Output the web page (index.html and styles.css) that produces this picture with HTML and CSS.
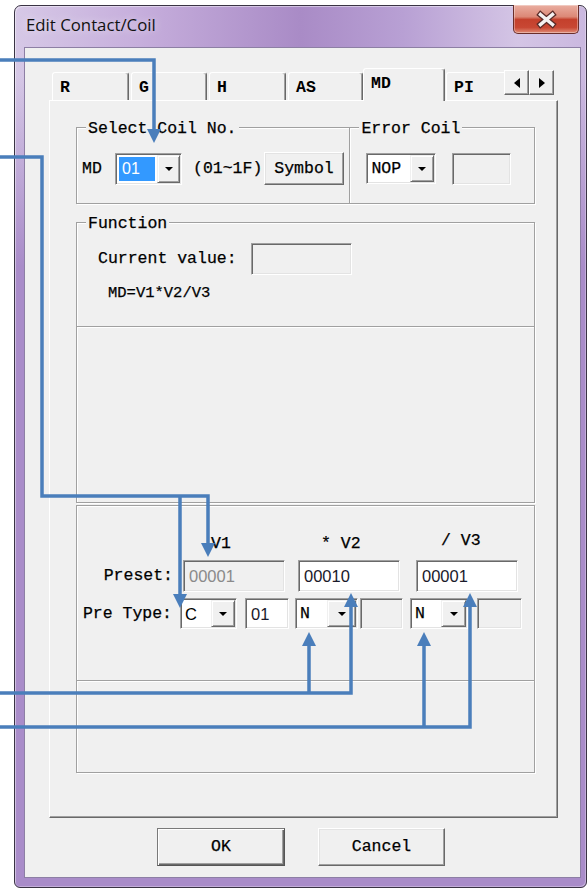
FILE: index.html
```html
<!DOCTYPE html>
<html>
<head>
<meta charset="utf-8">
<title>Edit Contact/Coil</title>
<link rel="stylesheet" href="styles.css">
</head>
<body>
<div class="window">
  <div class="titlebar">
    <span class="title">Edit Contact/Coil</span>
    <button class="close" aria-label="Close">
      <svg width="63" height="27" viewBox="0 0 63 27">
        <path d="M25.5 8.5 L37.5 18.5 M37.5 8.5 L25.5 18.5" stroke="#5a2b28" stroke-width="6" stroke-linecap="square" fill="none"/>
        <path d="M25.5 8.5 L37.5 18.5 M37.5 8.5 L25.5 18.5" stroke="#f4f1f1" stroke-width="3.4" stroke-linecap="square" fill="none"/>
      </svg>
    </button>
  </div>

  <div class="client">
    <div class="tabstrip">
      <div class="tablist">
        <div class="tab t-r">R</div>
        <div class="tab t-g">G</div>
        <div class="tab t-h">H</div>
        <div class="tab t-as">AS</div>
        <div class="tab t-md active">MD</div>
        <div class="tab t-pi">PI</div>
      </div>
      <div class="spin">
        <span class="spin-btn"><i class="tri-left"></i></span>
        <span class="spin-btn"><i class="tri-right"></i></span>
      </div>
    </div>

    <div class="panel">
      <div class="toprow">
        <div class="group g-select">
          <div class="legend">Select Coil No.</div>
          <div class="row r-select">
            <span class="md-lbl">MD</span>
            <div class="combo c-coil"><span class="val"><span class="sel">01</span></span><span class="drop"><i></i></span></div>
            <span class="range">(01~1F)</span>
            <button class="btn symbol">Symbol</button>
          </div>
        </div>
        <div class="group g-error">
          <div class="legend">Error Coil</div>
          <div class="row r-error">
            <div class="combo c-nop"><span class="val">NOP</span><span class="drop"><i></i></span></div>
            <div class="edit disabled e-err"></div>
          </div>
        </div>
      </div>

      <div class="group g-func">
        <div class="legend">Function</div>
        <div class="cv-row">
          <span class="cv-label">Current value:</span>
          <div class="edit disabled e-cv"></div>
        </div>
        <div class="formula">MD=V1*V2/V3</div>
        <div class="sep"></div>
      </div>

      <div class="group g-lower">
        <div class="hdr-row">
          <span class="h1">V1</span>
          <span class="h2">* V2</span>
          <span class="h3">/ V3</span>
        </div>
        <div class="preset-row">
          <span class="plabel">Preset:</span>
          <div class="edit disabled e-v1">00001</div>
          <div class="edit e-v2">00010</div>
          <div class="edit e-v3">00001</div>
        </div>
        <div class="type-row">
          <span class="tlabel">Pre Type:</span>
          <div class="combo c-type1"><span class="val">C</span><span class="drop"><i></i></span></div>
          <div class="edit e-num">01</div>
          <div class="combo c-type2"><span class="val">N</span><span class="drop"><i></i></span></div>
          <div class="edit disabled e-x2"></div>
          <div class="combo c-type3"><span class="val">N</span><span class="drop"><i></i></span></div>
          <div class="edit disabled e-x3"></div>
        </div>
        <div class="sep sep-lower"></div>
      </div>
    </div>

    <div class="buttons">
      <button class="btn default b-ok">OK</button>
      <button class="btn b-cancel">Cancel</button>
    </div>
  </div>
</div>

<!-- callout lines drawn over the dialog -->
<svg class="callouts" width="587" height="888" viewBox="0 0 587 888">
  <g fill="none" stroke="#4a7ebb" stroke-width="3.5" stroke-linejoin="miter">
    <path d="M0 60 H154 V131"/>
    <path d="M0 157 H42 V496 H208 V545"/>
    <path d="M180 496 V596"/>
    <path d="M0 693 H351 V605"/>
    <path d="M309 693 V644"/>
    <path d="M0 727 H470 V605"/>
    <path d="M424 727 V644"/>
  </g>
  <g fill="#4a7ebb">
    <polygon points="147,129 161,129 154,143"/>
    <polygon points="201,543 215,543 208,557"/>
    <polygon points="173,594 187,594 180,608"/>
    <polygon points="344,607 358,607 351,593"/>
    <polygon points="302,646 316,646 309,632"/>
    <polygon points="463,607 477,607 470,593"/>
    <polygon points="417,646 431,646 424,632"/>
  </g>
</svg>
</body>
</html>
```

FILE: styles.css
```css
* { box-sizing: border-box; }

html, body { margin: 0; padding: 0; }

body {
  width: 587px;
  height: 888px;
  overflow: hidden;
  position: relative;
  background: #fff;
  font-family: "Liberation Mono", "Courier New", monospace;
  font-size: 16.5px;
  line-height: 16px;
  color: #000;
}

/* ---------- window frame ---------- */
.window {
  margin: 5px 0 0 14px;
  width: 573px;
  height: 883px;
  border: 1px solid #3a3344;
  border-radius: 7px 7px 6px 6px;
  padding: 0 5px 9px 9px;
  display: flex;
  flex-direction: column;
  background:
    linear-gradient(180deg, rgba(170,142,202,0) 0, rgba(170,142,202,0) 70px, #a98cc9 260px),
    linear-gradient(90deg, #d6c8e6 0%, #c6aedc 22%, #a98bc6 50%, #b8a0d4 68%, #d4c5e5 88%, #cab8df 100%);
  box-shadow: inset 1px 1px 0 rgba(255,255,255,.45), inset -1px -1px 0 rgba(255,255,255,.3);
}

.titlebar {
  height: 41px;
  display: flex;
  align-items: flex-start;
  flex: none;
}

.title {
  margin: 8px 0 0 2px;
  font-family: "Open Sans", "Noto Sans", sans-serif;
  font-size: 16.8px;
  line-height: 22px;
  color: #111;
  text-shadow: 0 0 8px rgba(255,255,255,.7);
}

.close {
  margin: -1px 2px 0 auto;
  width: 66px;
  height: 29px;
  padding: 0;
  border: 1px solid #6a2e2a;
  border-top: none;
  border-radius: 0 0 5px 5px;
  background: linear-gradient(180deg, #eaaea1 0%, #dc8876 42%, #c4402c 52%, #c84733 80%, #e08c76 100%);
  box-shadow: inset 0 0 0 1px rgba(255,255,255,.35);
  display: flex;
  align-items: center;
  justify-content: center;
}
.close svg { display: block; }

/* ---------- client area ---------- */
.client {
  flex: 1;
  background: #f0f0f0;
  border: 1px solid #8d7fa4;
  display: flex;
  flex-direction: column;
  -webkit-text-stroke: 0.25px currentColor;
}

/* tabs */
.tabstrip {
  display: flex;
  align-items: flex-start;
  margin: 20px 0 0 24px;
  width: 509px;
  height: 32px;
  position: relative;
  z-index: 1;
}

.tablist {
  flex: none;
  width: 455px;
  height: 33px;
  display: flex;
  align-items: flex-end;
  overflow: hidden;
  padding-left: 3px;
}

.tab {
  flex: none;
  height: 28px;
  margin-bottom: 1px;
  border: 1px solid;
  border-bottom: none;
  border-color: #fff #696969 transparent #fff;
  border-radius: 3px 3px 0 0;
  box-shadow: inset -1px 0 0 #a0a0a0;
  background: #f0f0f0;
  padding: 7px 0 0 7px;
  line-height: 16px;
  font-weight: bold;
  -webkit-text-stroke: 0;
}
.t-r { width: 77px; margin-right: 2px; }
.t-g { width: 76px; margin-right: 2px; }
.t-h { width: 77px; margin-right: 2px; }
.t-as { width: 75px; }
.t-md { width: 82px; margin-right: 1px; }
.t-pi { width: 80px; }

.tab.active {
  height: 33px;
  margin-bottom: 0;
  padding-top: 7px;
}

.spin {
  display: flex;
  margin-top: 2px;
}
.spin-btn {
  width: 25px;
  height: 25px;
  background: #f0f0f0;
  border: 1px solid;
  border-color: #fff #696969 #696969 #fff;
  box-shadow: inset -1px -1px 0 #a0a0a0;
  display: flex;
  align-items: center;
  justify-content: center;
}
.tri-left {
  border-top: 5.5px solid transparent;
  border-bottom: 5.5px solid transparent;
  border-right: 6px solid #000;
}
.tri-right {
  border-top: 5.5px solid transparent;
  border-bottom: 5.5px solid transparent;
  border-left: 6px solid #000;
}

.panel {
  margin-left: 24px;
  width: 509px;
  height: 718px;
  border: 1px solid;
  border-color: #fff #696969 #696969 #fff;
  box-shadow: inset -1px -1px 0 #a0a0a0;
  padding-left: 26px;
  flex: none;
}

/* ---------- group boxes ---------- */
.group {
  border: 1px solid #a0a0a0;
  box-shadow: inset 1px 1px 0 #fff, 1px 1px 0 #fff;
}

.legend {
  width: fit-content;
  height: 16px;
  line-height: 16px;
  margin: -7px 0 -9px 9px;
  padding: 0 2px;
  background: #f0f0f0;
  white-space: pre;
}

.toprow {
  display: flex;
  margin-top: 26px;
  width: 459px;
  height: 77px;
}
.g-select { width: 275px; height: 77px; }
.g-error { width: 186px; height: 77px; margin-left: -1px; }

.row {
  display: flex;
  align-items: center;
  height: 33px;
  margin-top: 24px;
}
.r-select { padding-left: 5px; }
.r-error { padding-left: 16px; }

.md-lbl { width: 33px; }
.range { width: 70px; margin-left: 11px; white-space: pre; }

/* ---------- controls ---------- */
.combo {
  display: flex;
  height: 32px;
  border: 1px solid;
  border-color: #a0a0a0 #fff #fff #a0a0a0;
  box-shadow: inset 1px 1px 0 #696969, inset -1px -1px 0 #e3e3e3;
  background: #fff;
  padding: 1px;
  flex: none;
}
.combo .val {
  flex: 1;
  display: flex;
  align-items: center;
  padding-left: 3px;
}
.c-coil .val { padding: 2px; }
.sel {
  flex: 1;
  align-self: stretch;
  display: flex;
  align-items: center;
  padding-left: 3px;
  background: #3399ff;
  color: #fff;
  font-family: "Liberation Sans", Arial, sans-serif;
  font-size: 16px;
  -webkit-text-stroke: 0;
}
.drop {
  width: 23px;
  background: #f0f0f0;
  border: 1px solid;
  border-color: #f0f0f0 #696969 #696969 #f0f0f0;
  box-shadow: inset 1px 1px 0 #fff, inset -1px -1px 0 #a0a0a0;
  display: flex;
  align-items: center;
  justify-content: center;
}
.drop i {
  border-left: 4px solid transparent;
  border-right: 4px solid transparent;
  border-top: 4px solid #000;
}

.c-coil { width: 67px; }
.c-nop { width: 70px; height: 31px; }
.c-nop .drop { width: 24px; }

.edit {
  flex: none;
  height: 32px;
  border: 1px solid;
  border-color: #a0a0a0 #fff #fff #a0a0a0;
  box-shadow: inset 1px 1px 0 #696969, inset -1px -1px 0 #e3e3e3;
  background: #fff;
  padding-left: 5px;
  display: flex;
  align-items: center;
  font-family: "Liberation Sans", Arial, sans-serif;
  font-size: 16.5px;
  color: #1a1a2a;
  -webkit-text-stroke: 0;
}
.edit.disabled { background: #f0f0f0; color: #8a8a8a; }
.e-err { width: 59px; margin-left: 16px; }

.btn {
  background: #f0f0f0;
  border: 1px solid;
  border-color: #fff #696969 #696969 #fff;
  box-shadow: inset -1px -1px 0 #a0a0a0, inset 1px 1px 0 #e3e3e3;
  font: inherit;
  color: #000;
  padding: 0;
  line-height: 16px;
  -webkit-text-stroke: 0.25px currentColor;
}
.symbol { width: 80px; height: 33px; margin-left: 1px; }

/* ---------- function group ---------- */
.g-func {
  margin-top: 18px;
  width: 459px;
  height: 281px;
}
.cv-row {
  display: flex;
  align-items: center;
  height: 32px;
  margin-top: 20px;
  padding-left: 21px;
}
.cv-label { width: 153px; white-space: pre; }
.e-cv { width: 101px; height: 32px; }

.formula {
  margin: 10px 0 0 31px;
  line-height: 16px;
  font-size: 15.5px;
}

.sep {
  margin-top: 25px;
  height: 1px;
  background: #a0a0a0;
  box-shadow: 0 1px 0 #fff;
}

/* ---------- operand group ---------- */
.g-lower {
  margin-top: 2px;
  width: 459px;
  height: 268px;
}
.hdr-row {
  display: flex;
  align-items: flex-start;
  margin-top: 30px;
  height: 16px;
  white-space: pre;
}
.h1 { margin-left: 134px; width: 110px; }
.h2 { width: 120px; }
.h3 { margin-top: -3px; }

.preset-row {
  display: flex;
  align-items: center;
  height: 32px;
  margin-top: 8px;
}
.plabel { width: 106px; text-align: right; padding-right: 10px; }
.e-v1, .e-v2, .e-v3 { width: 102px; }
.e-v2 { margin-left: 13px; }
.e-v3 { margin-left: 16px; }

.type-row {
  display: flex;
  align-items: center;
  height: 31px;
  margin-top: 6px;
}
.tlabel { width: 103px; text-align: right; padding-right: 8px; white-space: pre; }
.type-row .combo, .type-row .edit { height: 31px; }
.c-type1 { width: 57px; }
.c-type1 .drop { width: 24px; }
.e-num { width: 44px; margin-left: 8px; }
.c-type2 { width: 63px; margin-left: 6px; }
.c-type2 .drop { width: 29px; }
.e-x2 { width: 43px; margin-left: 2px; }
.c-type3 { width: 58px; margin-left: 7px; }
.c-type3 .drop { width: 25px; }
.e-x3 { width: 45px; margin-left: 9px; }
.type-row .val { font-family: "Liberation Mono", monospace; }
.c-type1 .val { font-family: "Liberation Sans", Arial, sans-serif; -webkit-text-stroke: 0; }

.sep-lower { margin-top: 51px; }

/* ---------- dialog buttons ---------- */
.buttons {
  display: flex;
  gap: 33px;
  margin: 10px 0 0 132px;
}
.b-ok { width: 128px; height: 38px; }
.b-cancel { width: 127px; height: 38px; }
.btn.default {
  border-color: #7a7a7a #555 #555 #7a7a7a;
  box-shadow: inset 1px 1px 0 #fff, inset -1px -1px 0 #696969, inset -2px -2px 0 #a0a0a0;
}

/* ---------- callout overlay ---------- */
.callouts {
  position: absolute;
  left: 0;
  top: 0;
  pointer-events: none;
  z-index: 5;
}
```
